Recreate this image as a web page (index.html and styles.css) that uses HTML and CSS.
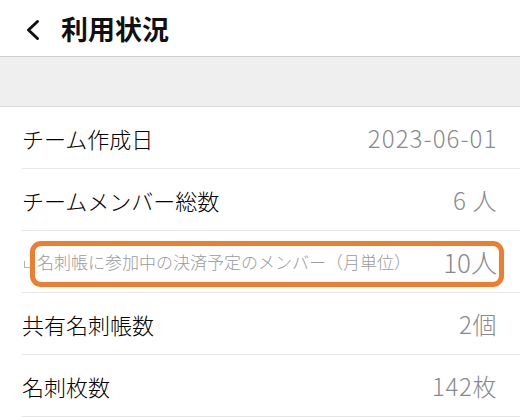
FILE: index.html
```html
<!DOCTYPE html>
<html lang="ja">
<head>
<meta charset="utf-8">
<link rel="stylesheet" href="styles.css">
</head>
<body>
<header class="nav">
  <svg class="back" width="16" height="22" viewBox="0 0 16 22"><path d="M12.5 2.5 L3.5 11 L12.5 19.5" fill="none" stroke="#111" stroke-width="3" stroke-linecap="round" stroke-linejoin="round"/></svg>
  <h1 class="title">利用状況</h1>
</header>
<div class="band"></div>
<ul class="list">
  <li class="row"><span class="label">チーム作成日</span><span class="value">2023-06-01</span></li>
  <li class="row"><span class="label">チームメンバー総数</span><span class="value">6 人</span></li>
  <li class="row sub"><span class="label small"><span class="corner"></span>名刺帳に参加中の決済予定のメンバー（月単位）</span><span class="value">10人</span><span class="highlight"></span></li>
  <li class="row"><span class="label">共有名刺帳数</span><span class="value">2個</span></li>
  <li class="row"><span class="label">名刺枚数</span><span class="value">142枚</span></li>
</ul>
</body>
</html>
```
FILE: styles.css
```css
html, body {
  margin: 0;
  padding: 0;
  background: #fff;
  font-family: "Noto Sans CJK JP", "Noto Sans", sans-serif;
}
.nav {
  height: 56px;
  border-bottom: 1px solid #cfcfcf;
  display: flex;
  align-items: center;
}
.back {
  margin-left: 25px;
  margin-top: 3px;
}
.title {
  margin: 0 0 0 20px;
  font-size: 27px;
  font-weight: 700;
  color: #111;
  line-height: 1;
}
.band {
  height: 49px;
  background: #efefef;
  border-bottom: 1px solid #dcdcdc;
}
.list {
  list-style: none;
  margin: 0;
  padding: 0 0 0 22px;
}
.row {
  position: relative;
  height: 61px;
  border-bottom: 1px solid #e6e6e6;
  display: flex;
  align-items: center;
  justify-content: space-between;
  padding-right: 23px;
}
.label {
  font-size: 22px;
  font-weight: 300;
  color: #000;
  display: flex;
  align-items: center;
}
.label.small {
  font-size: 17px;
  color: #9b9b9b;
}
.corner {
  width: 6px;
  height: 6px;
  border-left: 1.5px solid #b5b5b5;
  border-bottom: 1.5px solid #b5b5b5;
  margin: 6px 6px 0 2px;
}
.value {
  font-size: 24px;
  font-weight: 300;
  letter-spacing: 0.6px;
  color: #8a8a8e;
}
.value:first-letter {
  letter-spacing: inherit;
}
.row:first-child .value {
  letter-spacing: 1.1px;
  margin-right: -0.5px;
}
.sub .value {
  font-size: 26px;
  letter-spacing: 0;
}
.highlight {
  position: absolute;
  left: 8px;
  right: 16px;
  top: 10px;
  height: 46px;
  box-sizing: border-box;
  border: 5px solid #ee7e2f;
  border-radius: 11px;
}
```
